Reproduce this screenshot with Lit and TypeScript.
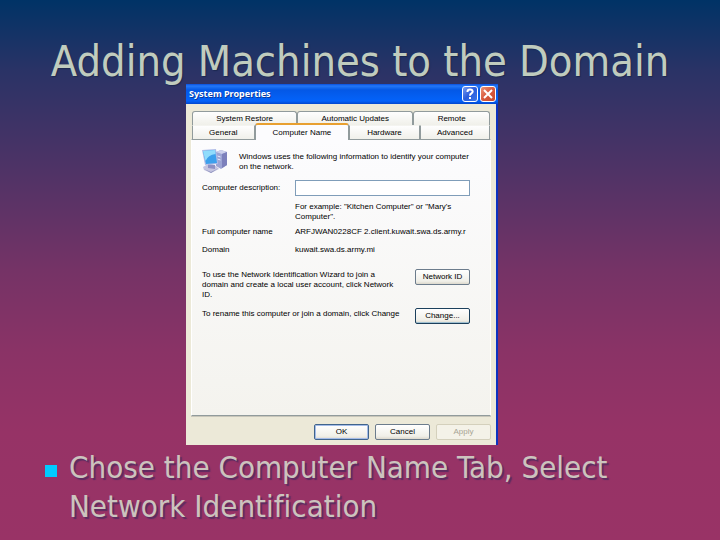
import { LitElement, html, css } from "lit";
import { customElement } from "lit/decorators.js";

@customElement("system-properties")
class SystemProperties extends LitElement {
  static styles = css`
    :host { display: block; }
    * { box-sizing: border-box; }
    .window {
      background: #ece9d8;
      border-right: 2px solid #0c33c0;
      font: 8px/10px "Liberation Sans", Arial, sans-serif;
      color: #000;
    }
    .titlebar {
      display: flex;
      align-items: center;
      gap: 2px;
      height: 20px;
      margin-right: -2px;
      padding: 0 2px 0 3px;
      background: linear-gradient(#0a50dc 0, #2478f8 2px, #0458e6 6px, #0460f4 14px, #0362fa 17px, #0246cc 20px);
    }
    .caption {
      flex: 1;
      margin: 0;
      font: bold 9px/22px "Noto Sans", Tahoma, sans-serif;
      color: #fff;
      text-shadow: 1px 1px 0 #0a3a9c;
    }
    .sys {
      width: 16px;
      height: 16px;
      padding: 0;
      border: 1px solid #fff;
      border-radius: 3px;
      background: linear-gradient(135deg, #7a9cf0, #2a5cdc 50%, #3c78e8);
    }
    .close { background: linear-gradient(135deg, #ec9478, #d8583c 50%, #c44c30); }
    .sys svg { display: block; }
    .body { padding: 7px 5px 5px; }
    .tabs { display: flex; padding: 0 1px; }
    .tab {
      height: 14px;
      padding: 0;
      border: 1px solid #919b9c;
      border-bottom: 0;
      border-radius: 3px 3px 0 0;
      background: linear-gradient(#fefefe, #f0f0ea);
      font: inherit;
      line-height: 13px;
      color: #000;
    }
    .back .tab { flex: 116; }
    .back .tab.restore { flex: 105; }
    .back .tab.remote { flex: 76; }
    .front .tab { flex: 70; border-radius: 0; border-top-color: #f4f4f0; }
    .front .tab.general { flex: 62; }
    .front .tab.active {
      flex: 95;
      height: 17px;
      margin: -2px 0 -1px;
      border-top: 2px solid #e8a030;
      border-radius: 3px 3px 0 0;
      background: #fcfcfe;
      position: relative;
    }
    .panel {
      display: grid;
      grid-template-columns: 93px 1fr;
      min-height: 277px;
      align-content: start;
      padding: 8px 20px 0 10px;
      border: 1px solid #919b9c;
      border-left-color: #fff;
      border-right-color: #fff;
      background: linear-gradient(#fcfcfe, #f4f3ee);
      box-shadow: 0 1px 0 #c8c6ba;
    }
    p { margin: 0; white-space: nowrap; }
    .intro { grid-column: 1 / 3; display: grid; grid-template-columns: 26px 1fr; gap: 11px; height: 32px; }
    .intro p { padding-top: 4px; }
    .desc { line-height: 16px; }
    .field {
      width: 100%;
      height: 16px;
      padding: 0 2px;
      border: 1px solid #7f9db9;
      border-radius: 0;
      background: #fff;
      font: inherit;
    }
    .example { grid-column: 2; padding: 6px 0 5px; }
    .fact { height: 18px; }
    .action { grid-column: 1 / 3; display: flex; align-items: flex-start; justify-content: space-between; }
    .identify { padding-top: 7px; height: 46px; }
    .identify .push { margin-top: -1px; }
    .push {
      flex: none;
      width: 55px;
      height: 16px;
      padding: 0;
      border: 1px solid #6c7c8c;
      border-radius: 2px;
      background: linear-gradient(#fff, #f0efe8 80%, #dcd8cc);
      font: inherit;
      line-height: 14px;
      color: #000;
    }
    .panel .push { margin-top: -1px; }
    .change { border-color: #1c405c; box-shadow: inset 0 -1px 0 #a0c0d0; }
    .ok { border-color: #40648c; box-shadow: inset 0 0 0 1px #a4bce8; }
    .push:disabled { border-color: #d4d0bc; background: #f4f2e8; color: #a8a594; }
    .footer { display: flex; justify-content: flex-end; gap: 6px; padding-top: 8px; }
  `;

  render() {
    return html`
      <section class="window" aria-label="System Properties">
        <header class="titlebar">
          <h2 class="caption">System Properties</h2>
          <button class="sys" aria-label="Help">
            <svg width="14" height="14" viewBox="0 0 14 14" fill="none" stroke="#fff" stroke-width="2">
              <path d="M4.5 5V4.5Q4.5 2.5 7 2.5T9.7 4.6Q9.7 5.8 8.3 6.5Q7 7.2 7 8.8M7 10v2" />
            </svg>
          </button>
          <button class="sys close" aria-label="Close">
            <svg width="14" height="14" viewBox="0 0 14 14" stroke="#fff" stroke-width="2">
              <path d="M3 3l8 8M11 3l-8 8" />
            </svg>
          </button>
        </header>
        <div class="body">
          <div class="tabs back">
            <button class="tab restore">System Restore</button>
            <button class="tab">Automatic Updates</button>
            <button class="tab remote">Remote</button>
          </div>
          <div class="tabs front">
            <button class="tab general">General</button>
            <button class="tab active">Computer Name</button>
            <button class="tab">Hardware</button>
            <button class="tab">Advanced</button>
          </div>
          <div class="panel">
            <div class="intro">
              <svg width="26" height="26" viewBox="0 0 26 26">
                <path d="M14 4l5-2 6 2v13l-6 4-5-3z" fill="#9ca4d4" />
                <path d="M14 4l5-2 6 2-5 2z" fill="#ccd0ec" />
                <path d="M20 6l5-2v13l-5 3z" fill="#7c80bc" />
                <path d="M15.500 8l3 1M15.500 11l3 1" stroke="#e8ecfc" />
                <path d="M1 19q6-5 13-1l3 3-8 4-7-3z" fill="#c4c4e0" />
                <path d="M2 21l7 3 8-4-8 5z" fill="#8c90bc" />
                <path d="M6 16l7 1v4l-7-1z" fill="#8c90c4" />
                <path d="M0 2l14-1 2 15-13 1z" fill="#b0bce8" />
                <path d="M1 3l12-1 2 13-11 1z" fill="#3ca0ec" />
                <path d="M1 3l12-1 .5 4Q6 7 3.500 13z" fill="#90dcfc" />
              </svg>
              <p>Windows uses the following information to identify your computer<br />on the network.</p>
            </div>
            <label class="desc" for="description">Computer description:</label>
            <input class="field" id="description" type="text" />
            <p class="example">For example: "Kitchen Computer" or "Mary's<br />Computer".</p>
            <p class="fact">Full computer name</p>
            <p class="fact">ARFJWAN0228CF 2.client.kuwait.swa.ds.army.r</p>
            <p class="fact">Domain</p>
            <p class="fact">kuwait.swa.ds.army.mi</p>
            <div class="action identify">
              <p>To use the Network Identification Wizard to join a<br />domain and create a local user account, click Network<br />ID.</p>
              <button class="push">Network ID</button>
            </div>
            <div class="action">
              <p>To rename this computer or join a domain, click Change</p>
              <button class="push change">Change...</button>
            </div>
          </div>
          <footer class="footer">
            <button class="push ok">OK</button>
            <button class="push">Cancel</button>
            <button class="push" disabled>Apply</button>
          </footer>
        </div>
      </section>
    `;
  }
}

@customElement("app-root")
class AppRoot extends LitElement {
  static styles = css`
    :host { display: block; }
    .slide {
      box-sizing: border-box;
      min-height: 100vh;
      padding: 36px 45px 0;
      background: linear-gradient(#003366, #2a3366 13%, #503366 32%, #753366 50%, #8a3366 65%, #963366 80%, #993366);
      font-family: "DejaVu Sans Condensed", Tahoma, "Noto Sans", sans-serif;
      font-variant-ligatures: none;
    }
    .title {
      margin: 0;
      font-size: 43px;
      line-height: 50px;
      height: 48px;
      font-weight: 400;
      text-align: center;
      white-space: nowrap;
      color: #c0ccbe;
      text-shadow: 1px 1px 1px #1c2850;
    }
    .shot { max-width: 312px; margin: 0 auto; padding-right: 36px; }
    .points { margin: 3px 0 0; padding: 0; list-style: none; }
    .point {
      display: grid;
      grid-template-columns: 12px 1fr;
      gap: 12px;
      font-size: 31px;
      line-height: 39px;
      color: #ccc4be;
      text-shadow: 2px 2px 1px #5c2c60;
    }
    .point::before { content: ""; width: 12px; height: 12px; margin-top: 17px; background: #0cf; }
  `;

  render() {
    return html`
      <main class="slide">
        <h1 class="title">Adding Machines to the Domain</h1>
        <system-properties class="shot"></system-properties>
        <ul class="points">
          <li class="point">Chose the Computer Name Tab, Select Network Identification</li>
        </ul>
      </main>
    `;
  }
}
